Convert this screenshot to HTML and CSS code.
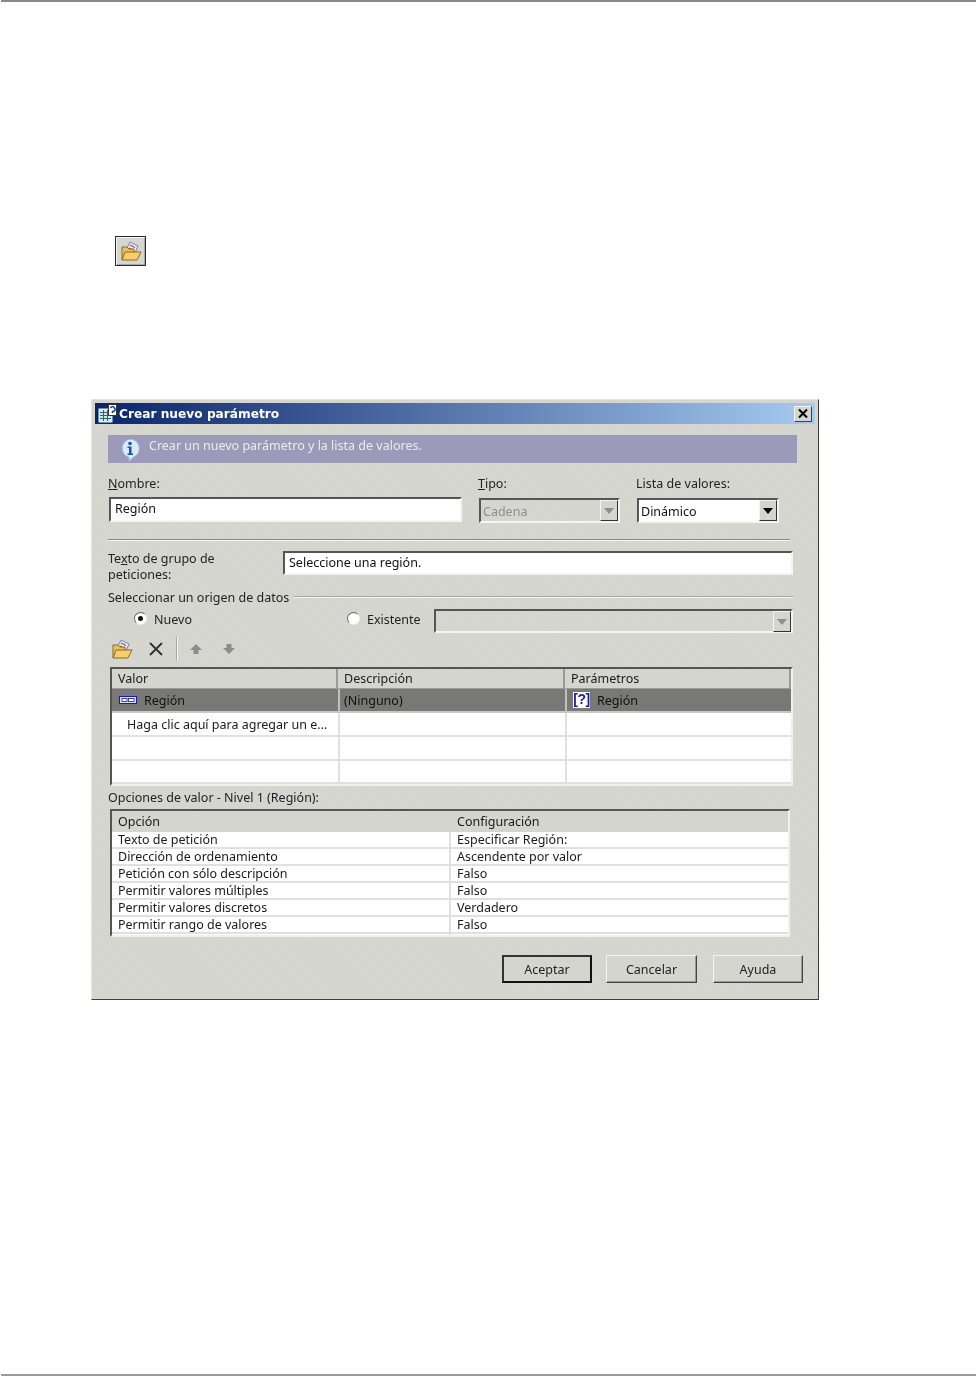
FILE: index.html
```html
<!DOCTYPE html>
<html lang="es">
<head>
<meta charset="utf-8">
<title>Crear nuevo parámetro</title>
<link rel="stylesheet" href="styles.css">
</head>
<body>
<div class="page">
  <div class="rule rule-top"></div>
  <div class="tool-button">
    <svg width="22" height="22" viewBox="0 0 22 22"><path d="M6 10 10 2l8 4-3 7z" fill="#e4e8f6" stroke="#6f86b8"/><path d="M10 5l5 2.500M9 8l5 2.500" stroke="#c04a50" stroke-width="1.200"/><path d="M2 20V7h5l2 2h5v3" fill="#e8c060" stroke="#8a6a20"/><path d="M2 20l3-8h16l-4 8z" fill="#f6cf6a" stroke="#8a6a20"/></svg>
  </div>
  <section class="dialog">
    <header class="titlebar">
      <svg class="title-icon" width="20" height="19" viewBox="0 0 20 19"><rect x="1" y="5" width="13" height="13" fill="#d4e6ec" stroke="#e8f0f4"/><path d="M2 8.500h11M2 11.500h11M2 14.500h11M5.500 6v11M9.500 6v11" stroke="#1f6a70"/><rect x="10.500" y=".5" width="8" height="11" fill="#fff" stroke="#333"/><path d="M12.500 4q2-3 4 0t-2 3.500v1.500" fill="none" stroke="#123a9a" stroke-width="1.500"/></svg>
      <h1 class="title">Crear nuevo parámetro</h1>
      <div class="close"><svg width="12" height="11" viewBox="0 0 12 11"><path d="M2 1.500 10 9.500M10 1.500 2 9.500" stroke="#000" stroke-width="2"/></svg></div>
    </header>
    <div class="body">
      <div class="banner">
        <svg width="22" height="24" viewBox="0 0 22 24"><path d="M11 1a9.500 9.500 0 0 1 3 18.500L10 23.500v-4A9.500 9.500 0 0 1 11 1z" fill="#dbeaf8" stroke="#8fb4dc"/><circle cx="11" cy="5.500" r="1.800" fill="#1c55a8"/><path d="M8.500 8.500h4v7H14V17H8.500v-1.500H10V10H8.500z" fill="#1c55a8"/></svg>
        <span class="banner-text">Crear un nuevo parámetro y la lista de valores.</span>
      </div>
      <div class="fields">
        <div class="field field-name">
          <label class="label"><u>N</u>ombre:</label>
          <div class="input input-name">Región</div>
        </div>
        <div class="field field-type">
          <label class="label"><u>T</u>ipo:</label>
          <div class="combo disabled"><span class="combo-text">Cadena</span><i class="arrow"></i></div>
        </div>
        <div class="field field-list">
          <label class="label">Lista de valores:</label>
          <div class="combo"><span class="combo-text">Dinámico</span><i class="arrow"></i></div>
        </div>
      </div>
      <div class="separator"></div>
      <div class="prompt">
        <label class="label prompt-label">Te<u>x</u>to de grupo de peticiones:</label>
        <div class="input input-prompt">Seleccione una región.</div>
      </div>
      <div class="group-heading"><span>Seleccionar un origen de datos</span><div class="group-line"></div></div>
      <div class="source">
        <div class="radio checked"></div><span class="radio-text new-text">Nuevo</span>
        <div class="radio existing"></div><span class="radio-text existing-text">Existente</span>
        <div class="combo disabled source-combo"><span></span><i class="arrow"></i></div>
      </div>
      <div class="toolbar">
        <svg class="t-folder" width="22" height="22" viewBox="0 0 22 22"><path d="M6 10 10 2l8 4-3 7z" fill="#e4e8f6" stroke="#6f86b8"/><path d="M10 5l5 2.500M9 8l5 2.500" stroke="#c04a50" stroke-width="1.200"/><path d="M2 20V7h5l2 2h5v3" fill="#e8c060" stroke="#8a6a20"/><path d="M2 20l3-8h16l-4 8z" fill="#f6cf6a" stroke="#8a6a20"/></svg>
        <svg class="t-delete" width="16" height="16" viewBox="0 0 16 16"><path d="M2 2 14 14M14 2 2 14" stroke="#303030" stroke-width="1.800"/></svg>
        <div class="t-sep"></div>
        <svg class="t-up" width="14" height="12" viewBox="0 0 14 12"><path d="M7 1 13 7H9.500v4h-5V7H1z" fill="#8c8c8c"/></svg>
        <svg class="t-down" width="14" height="12" viewBox="0 0 14 12"><path d="M7 11 13 5H9.500V1h-5v4H1z" fill="#8c8c8c"/></svg>
      </div>
      <table class="grid values">
        <thead><tr><th class="c1">Valor</th><th class="c2">Descripción</th><th class="c3">Parámetros</th></tr></thead>
        <tbody>
          <tr class="selected">
            <td><div class="cell-icon"><svg class="param" width="18" height="8" viewBox="0 0 18 8"><rect x=".5" y=".5" width="17" height="7" fill="#d8dcf4" stroke="#1c1ca0"/><rect x="3" y="2.500" width="5" height="3" fill="#fff" stroke="#1c1ca0" stroke-width=".8"/><rect x="9.500" y="2.500" width="5.500" height="3" fill="#fff" stroke="#1c1ca0" stroke-width=".8"/></svg>Región</div></td>
            <td>(Ninguno)</td>
            <td><div class="cell-icon"><div class="q-icon">[?]</div>Región</div></td>
          </tr>
          <tr class="tall"><td class="add">Haga clic aquí para agregar un e…</td><td></td><td></td></tr>
          <tr class="tall"><td></td><td></td><td></td></tr>
          <tr class="last"><td></td><td></td><td></td></tr>
        </tbody>
      </table>
      <p class="label options-label">Opciones de valor - Nivel 1 (Región):</p>
      <table class="grid options">
        <thead><tr><th class="o1">Opción</th><th class="o2">Configuración</th></tr></thead>
        <tbody>
          <tr><td>Texto de petición</td><td>Especificar Región:</td></tr>
          <tr><td>Dirección de ordenamiento</td><td>Ascendente por valor</td></tr>
          <tr><td>Petición con sólo descripción</td><td>Falso</td></tr>
          <tr><td>Permitir valores múltiples</td><td>Falso</td></tr>
          <tr><td>Permitir valores discretos</td><td>Verdadero</td></tr>
          <tr><td>Permitir rango de valores</td><td>Falso</td></tr>
          <tr class="stub"><td></td><td></td></tr>
        </tbody>
      </table>
      <div class="buttons">
        <button class="btn default">Aceptar</button>
        <button class="btn cancel">Cancelar</button>
        <button class="btn help">Ayuda</button>
      </div>
    </div>
  </section>
  <div class="rule rule-bottom"></div>
</div>
</body>
</html>
```

FILE: styles.css
```css
* { box-sizing: border-box; }
html, body { margin: 0; padding: 0; background: #fff; }
body { font-family: "Noto Sans", "Liberation Sans", sans-serif; font-size: 12.5px; color: #222; }
.page { width: 976px; height: 1377px; display: flex; flex-direction: column; overflow: hidden; }
.rule { height: 2px; background: #8a8a8a; margin-left: 1px; flex: none; }
.rule-bottom { margin-top: auto; margin-bottom: 1px; background: #9a9a9a; }

.tool-button { width: 31px; height: 30px; margin: 234px 0 0 115px; background: #d6d6d0; border: 1px solid #2a2a2a; box-shadow: inset 1px 1px 0 #f4f4f0, inset -1px -1px 0 #a8a8a4; display: flex; align-items: center; justify-content: center; flex: none; }

.dialog { width: 728px; height: 601px; margin: 133px 0 0 91px; padding: 3px; flex: none; display: flex; flex-direction: column; background-color: #d5d5cf; background-image: repeating-linear-gradient(45deg, rgba(255,255,255,.06) 0 1px, transparent 1px 3px); border: 1px solid; border-color: #e4e4e0 #404040 #404040 #e4e4e0; filter: blur(.45px); }

.titlebar { height: 21px; flex: none; display: flex; align-items: center; padding: 0 3px; background: linear-gradient(90deg, #0a246a, #a6caf0); }
.title-icon { flex: none; margin-right: 1px; }
.title { margin: 0; flex: 1; font: bold 12.2px "DejaVu Sans", sans-serif; color: #fff; }
.close { width: 18px; height: 16px; background: #d5d5cf; border: 1px solid; border-color: #f4f4f0 #404040 #404040 #f4f4f0; display: flex; align-items: center; justify-content: center; }

.body { flex: 1; padding: 11px 18px 0 13px; }
.banner { width: 689px; height: 28px; background: #9c9ab8; color: #ecece8; display: flex; align-items: flex-start; padding: 3px 0 0 11px; gap: 8px; }
.banner-text { line-height: 16px; }
.label { display: block; height: 14px; line-height: 14px; margin: 0; }
.fields { display: flex; margin-top: 14px; height: 45px; }
.field { display: flex; flex-direction: column; }
.field .label { margin-bottom: 6px; }
.field-name { width: 370px; }
.field-type { width: 158px; }
.field-list { width: 150px; }
.input { background: #fff; border: 2px solid; border-color: #555 #f4f4f0 #f4f4f0 #555; color: #111; line-height: 19px; padding-left: 4px; }
.input-name { width: 353px; height: 25px; margin-left: 1px; }
.combo { width: 142px; height: 25px; margin-top: 1px; display: flex; align-items: center; justify-content: space-between; background: #fff; border: 2px solid; border-color: #555 #f4f4f0 #f4f4f0 #555; padding-left: 2px; color: #111; }
.combo-text { margin-top: 2px; }
.disabled { background: transparent; color: #8e8e8a; }
.field-type .combo { width: 141px; margin-left: 1px; }
.arrow { width: 18px; height: 21px; background: #d5d5cf; border: 1px solid; border-color: #f4f4f0 #333 #333 #f4f4f0; position: relative; flex: none; }
.arrow::after { content: ""; position: absolute; left: 3px; top: 7px; border: 5px solid transparent; border-top: 6px solid #000; border-bottom: 0; }
.disabled .arrow::after { border-top-color: #8e8e8a; }
.field-list .combo { margin-left: 1px; }
.separator { width: 682px; height: 2px; margin-top: 17px; background: #888; border-bottom: 1px solid #f4f4f0; }
.prompt { display: flex; margin-top: 10px; height: 31px; }
.prompt-label { width: 175px; height: 32px; line-height: 16px; padding-right: 50px; }
.input-prompt { width: 510px; height: 24px; }
.group-heading { display: flex; align-items: center; gap: 4px; margin-top: 8px; height: 14px; white-space: nowrap; }
.group-line { flex: 1; height: 2px; margin-right: 3px; background: #a8a8a4; border-bottom: 1px solid #f4f4f0; }
.source { display: flex; align-items: center; margin-top: 5px; height: 24px; }
.radio { width: 13px; height: 13px; border-radius: 50%; background: #fff; border: 1px solid; border-color: #666 #eee #eee #666; margin-left: 26px; position: relative; flex: none; margin-top: -6px; }
.radio.checked::after { content: ""; position: absolute; left: 3px; top: 3px; width: 5px; height: 5px; border-radius: 50%; background: #111; }
.radio-text { margin-left: 7px; margin-top: -4px; }
.new-text { width: 44px; }
.existing-text { width: 55px; }
.radio.existing { margin-left: 149px; }
.combo.source-combo { width: 359px; height: 24px; margin-top: 0; margin-left: 12px; }
.toolbar { height: 24px; margin-top: 4px; display: flex; align-items: center; }
.t-folder { margin-left: 3px; }
.t-delete { margin-left: 15px; }
.t-sep { width: 2px; height: 24px; margin-left: 12px; background: #a8a8a4; border-right: 1px solid #f4f4f0; }
.t-up { margin-left: 11px; }
.t-down { margin-left: 19px; }

.grid { border-collapse: separate; border-spacing: 0; table-layout: fixed; margin-left: 2px; background: #fff; border: 2px solid; border-color: #555 #f0f0ec #f0f0ec #555; color: #1a1a1a; }
.grid th { font-weight: normal; text-align: left; padding: 0 0 0 6px; background: #d5d5cf; border-right: 2px solid #9a9a96; border-bottom: 1px solid #9a9a96; }
.grid td { padding: 0 0 0 6px; border-bottom: 2px solid #e0e0e0; white-space: nowrap; }
.values { width: 683px; height: 119px; margin-top: 6px; }
.values .c1 { width: 226px; }
.values .c2 { width: 227px; }
.values thead tr { height: 20px; }
.values td + td { border-left: 2px solid #e0e0e0; padding-left: 4px; }
.selected { height: 24px; }
.selected td { background: #787876; border-bottom-color: #c8c8c4; color: #111; }
.values .selected td + td { border-left-color: #c0c0bc; }
.tall { height: 24px; }
.last { height: 23px; }
.grid .add { padding-left: 15px; }
.cell-icon { display: flex; align-items: center; }
.param { margin: 0 7px 0 1px; }
.q-icon { width: 17px; height: 16px; margin: 0 7px 0 2px; background: #fff; color: #1c1ca0; font: bold 14px/15px "Liberation Sans", sans-serif; letter-spacing: -.5px; text-align: center; }
.options-label { margin: 5px 0 0; }
.options { width: 680px; height: 128px; margin-top: 4px; }
.options .o1 { width: 339px; }
.options th { border-right: 0; border-bottom: 0; }
.options thead tr { height: 21px; }
.options tbody tr { height: 17px; }
.options td { line-height: 15px; }
.options td:first-child { border-right: 2px solid #e0e0e0; }
.options .stub { height: 1px; }
.options .stub td { line-height: 0; border-bottom: 0; }
.buttons { display: flex; margin-top: 18px; margin-left: 394px; }
.btn { width: 91px; height: 28px; flex: none; margin: 0; padding: 0; background: #d5d5cf; font: inherit; color: #222; border: 1px solid; border-color: #f4f4f0 #444 #444 #f4f4f0; box-shadow: inset -1px -1px 0 #999; }
.btn.cancel { margin-left: 14px; }
.btn.help { width: 90px; margin-left: 16px; }
.btn.default { width: 90px; border: 2px solid; border-color: #333 #111 #111 #333; box-shadow: none; }
```
